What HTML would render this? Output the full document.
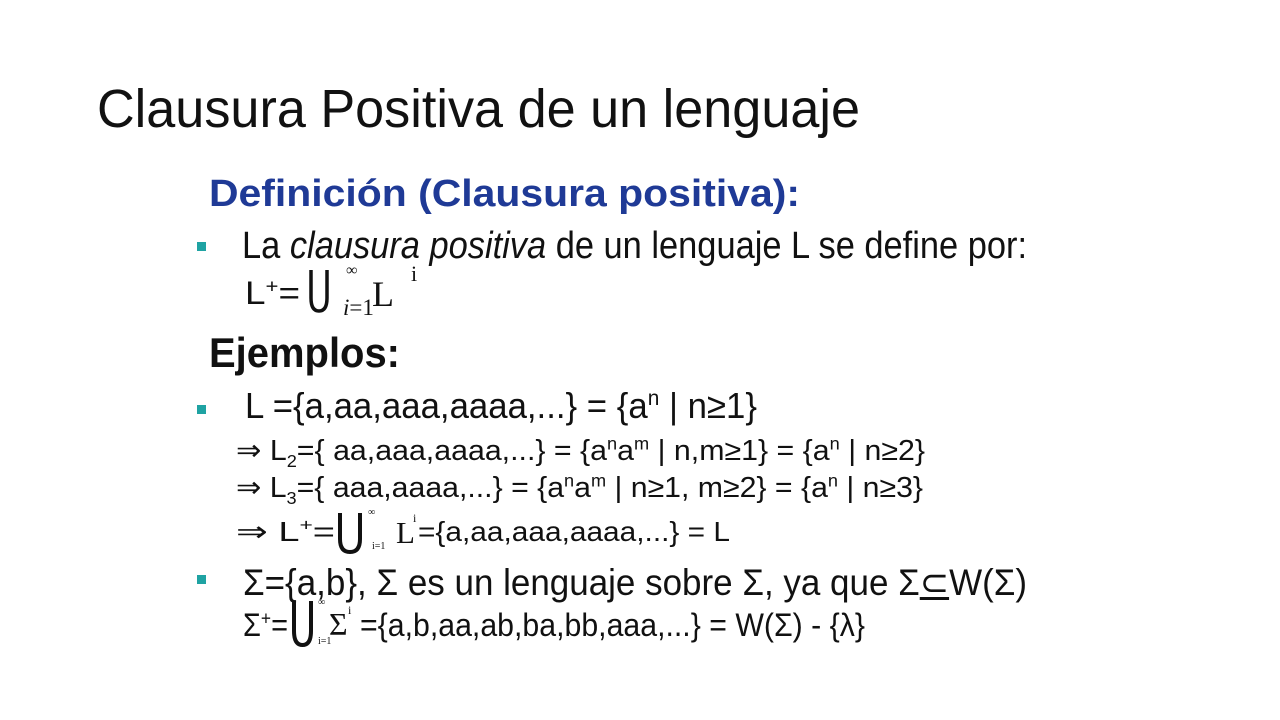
<!DOCTYPE html>
<html><head><meta charset="utf-8"><style>
body{margin:0;background:#fff;width:1280px;height:720px;overflow:hidden;position:relative;font-family:"Liberation Sans",Arial,sans-serif;color:#111}
.f{position:absolute;white-space:nowrap;line-height:1;transform-origin:0 0}
.b{position:absolute;width:9px;height:9px;background:#1fa3a3}
sup,sub{font-size:60%;line-height:0}
.u{position:absolute}
.sm{position:absolute;font-family:"Liberation Serif",serif;line-height:1;white-space:nowrap}
</style></head><body>
<div class="f" style="left:97px;top:82px;font-size:54px;--w:763">Clausura Positiva de un lenguaje</div>
<div class="f" style="left:209px;top:175px;font-size:38px;font-weight:bold;color:#1f3a96;--w:591">Definición (Clausura positiva):</div>
<div class="b" style="left:197px;top:242px"></div>
<div class="f" style="left:242px;top:227px;font-size:38px;--w:785">La <i>clausura positiva</i> de un lenguaje L se define por:</div>
<div class="f" style="left:245px;top:277px;font-size:32px;--w:55">L<sup>+</sup>=</div>
<svg class="u" style="left:308px;top:268px" width="22" height="46"><path d="M3 2 V30 Q3 43 11 43 Q19 43 19 30 V2" fill="none" stroke="#111" stroke-width="3.5"/></svg>
<div class="sm" style="left:346px;top:263px;font-size:16px">∞</div>
<div class="sm" style="left:343px;top:296px;font-size:23px"><i>i</i>=1</div>
<div class="sm" style="left:372px;top:276px;font-size:36px">L</div>
<div class="sm" style="left:411px;top:263px;font-size:22px">i</div>
<div class="f" style="left:209px;top:332px;font-size:42px;font-weight:bold;--w:191">Ejemplos:</div>
<div class="b" style="left:197px;top:405px"></div>
<div class="f" style="left:245px;top:388px;font-size:36px;--w:512">L ={a,aa,aaa,aaaa,...} = {a<sup>n</sup> | n≥1}</div>
<div class="f" style="left:236px;top:437px;font-size:29px;--w:689">⇒ L<sub>2</sub>={ aa,aaa,aaaa,...} = {a<sup>n</sup>a<sup>m</sup> | n,m≥1} = {a<sup>n</sup> | n≥2}</div>
<div class="f" style="left:236px;top:474px;font-size:29px;--w:687">⇒ L<sub>3</sub>={ aaa,aaaa,...} = {a<sup>n</sup>a<sup>m</sup> | n≥1, m≥2} = {a<sup>n</sup> | n≥3}</div>
<div class="f" style="left:236px;top:518px;font-size:28px;--w:99">⇒ L<sup>+</sup>=</div>
<svg class="u" style="left:336px;top:511px" width="28" height="44"><path d="M4 2 V28 Q4 41 14 41 Q24 41 24 28 V2" fill="none" stroke="#111" stroke-width="4"/></svg>
<div class="sm" style="left:368px;top:508px;font-size:10px">∞</div>
<div class="sm" style="left:372px;top:542px;font-size:10px">i=1</div>
<div class="sm" style="left:396px;top:517px;font-size:31px">L</div>
<div class="sm" style="left:413px;top:512px;font-size:12px">i</div>
<div class="f" style="left:418px;top:518px;font-size:28px;--w:312">={a,aa,aaa,aaaa,...} = L</div>
<div class="b" style="left:197px;top:575px"></div>
<div class="f" style="left:243px;top:564px;font-size:37px;--w:784">Σ={a,b}, Σ es un lenguaje sobre Σ, ya que Σ<u>⊂</u>W(Σ)</div>
<div class="f" style="left:243px;top:609px;font-size:32px;--w:45">Σ<sup>+</sup>=</div>
<svg class="u" style="left:290px;top:599px" width="25" height="50"><path d="M4 2 V32 Q4 46 12.5 46 Q21 46 21 32 V2" fill="none" stroke="#111" stroke-width="4"/></svg>
<div class="sm" style="left:318px;top:598px;font-size:10px">∞</div>
<div class="sm" style="left:318px;top:637px;font-size:10px">i=1</div>
<div class="sm" style="left:329px;top:608px;font-size:32px">Σ</div>
<div class="sm" style="left:348px;top:604px;font-size:12px">i</div>
<div class="f" style="left:360px;top:609px;font-size:32px;--w:505">={a,b,aa,ab,ba,bb,aaa,...} = W(Σ) - {λ}</div>
<script>
document.querySelectorAll('.f').forEach(function(e){var w=parseFloat(getComputedStyle(e).getPropertyValue('--w'));if(w){var r=e.getBoundingClientRect().width;if(r>0)e.style.transform='scaleX('+(w/r)+')';}});
</script>
</body></html>
